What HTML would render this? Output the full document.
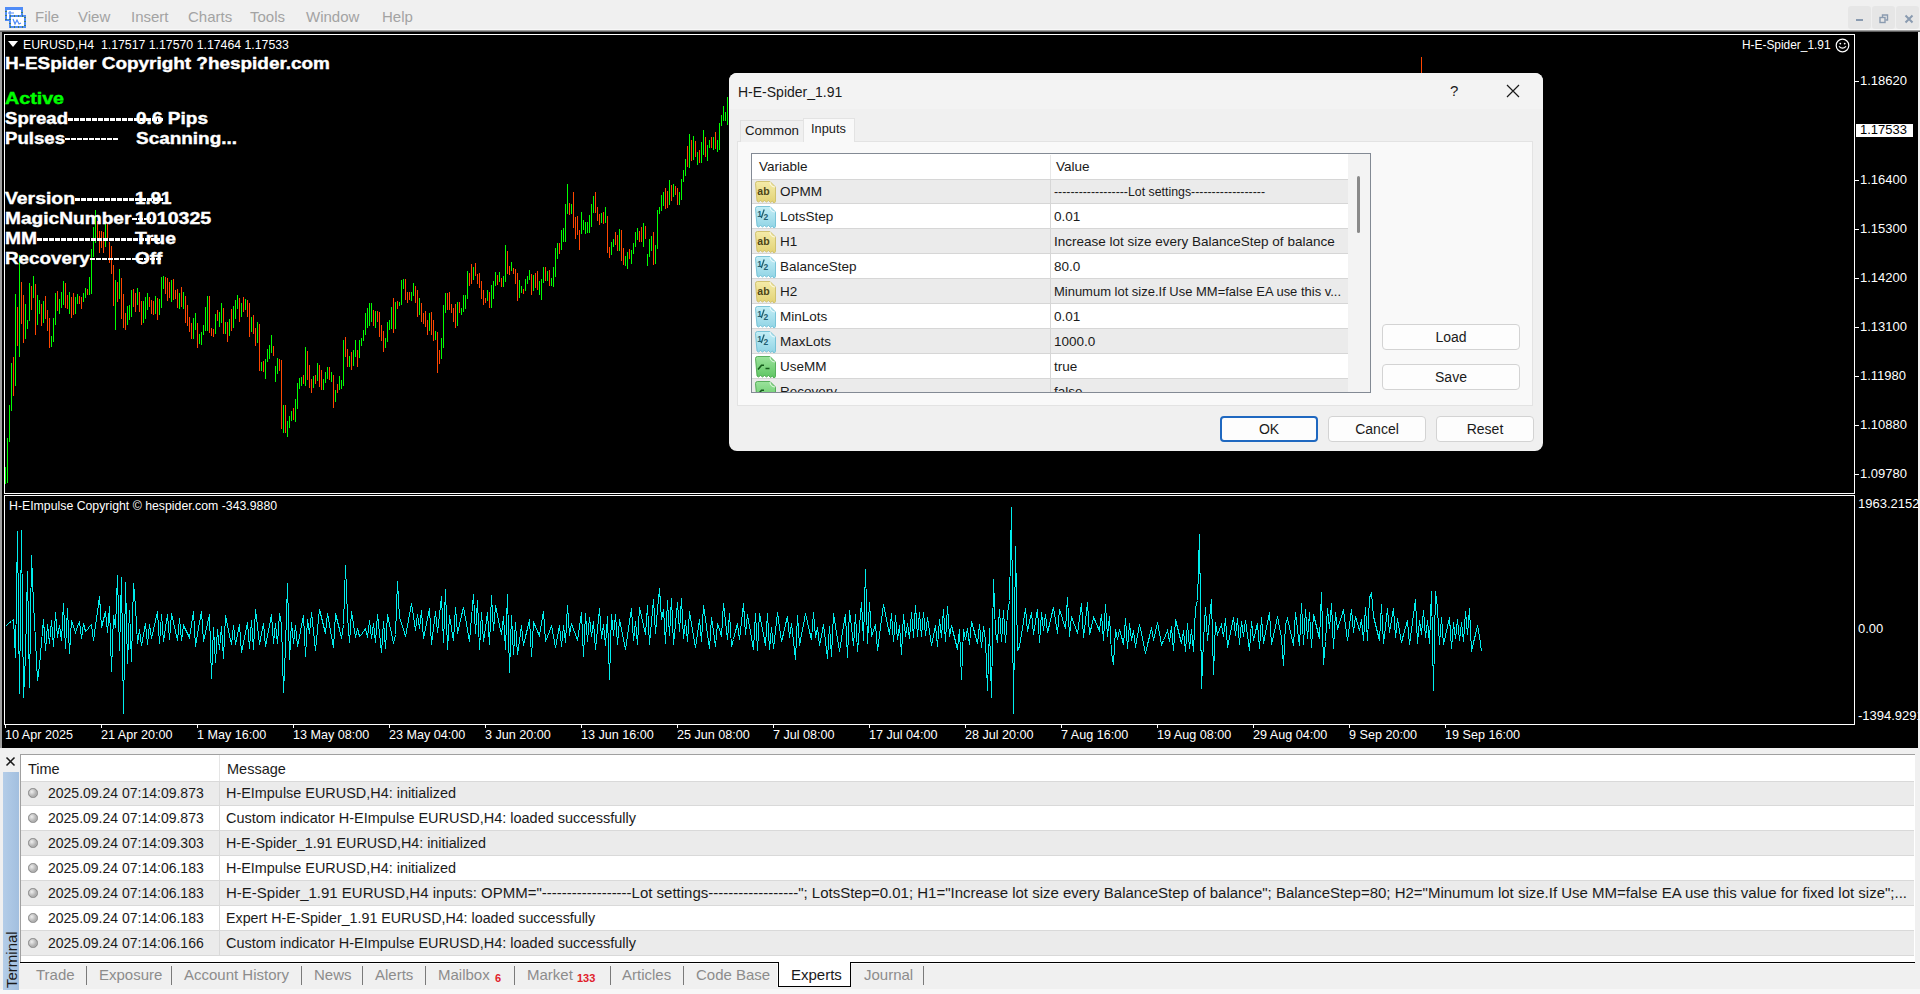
<!DOCTYPE html><html><head><meta charset="utf-8"><style>
*{margin:0;padding:0;box-sizing:border-box}
html,body{width:1920px;height:994px;overflow:hidden;background:#f0f0f0;font-family:"Liberation Sans",sans-serif}
.a{position:absolute;white-space:pre}
#menu{position:absolute;left:0;top:0;width:1920px;height:30px;background:#f0f0f0}
.mi{position:absolute;top:7px;font-size:15px;color:#a3a3a3;line-height:20px}
.wb{position:absolute;top:6px;width:23px;height:23px;background:#e6e6e6;border-radius:3px}
#chartwin{position:absolute;left:2px;top:32px;width:1916px;height:716px;background:#000}
.pl{position:absolute;left:1860px;font-size:13px;color:#fff;line-height:14px}
.tl{position:absolute;top:728px;font-size:12.6px;color:#fff;line-height:14px}
.ov{position:absolute;font-size:16.5px;font-weight:700;color:#fff;line-height:18px;transform-origin:0 0;-webkit-text-stroke:0.4px #fff}

#dlg{position:absolute;left:729px;top:73px;width:814px;height:378px;background:#f0f0f0;border-radius:8px;overflow:hidden}
.dt{position:absolute;font-size:13.5px;color:#1a1a1a;line-height:16px;white-space:pre}
.btn{position:absolute;height:26px;background:#fdfdfd;border:1px solid #d3d3d3;border-radius:4px;font-size:14px;color:#1a1a1a;text-align:center;line-height:24px}

.tt{position:absolute;font-size:14px;color:#1a1a1a;line-height:16px;white-space:pre}
.tab{position:absolute;top:966px;font-size:15px;color:#8c8c8c;line-height:17px;white-space:pre}
.sep{position:absolute;top:966px;width:1px;height:19px;background:#7a7a7a}
</style></head><body><div id="menu">
<svg class="a" style="left:5px;top:7px" width="21" height="21" viewBox="0 0 21 21">
<rect x="1" y="1" width="16" height="12" fill="#fff" stroke="#4f8cf7" stroke-width="2"/>
<rect x="1" y="1" width="16" height="12" fill="none" stroke="#3f7f6a" stroke-width="2" stroke-dasharray="1 3"/>
<rect x="0" y="0" width="18" height="3" fill="#4f8cf7"/>
<rect x="5" y="9" width="15" height="11" fill="#fff" stroke="#4f8cf7" stroke-width="2"/>
<rect x="5" y="9" width="15" height="11" fill="none" stroke="#3f7f6a" stroke-width="2" stroke-dasharray="1 3"/>
<path d="M3 6h6M5 4v4M8 12l2 5 2-4 2 4 2-1" stroke="#4f8cf7" stroke-width="1.2" fill="none"/>
</svg>
<div class="mi" style="left:35px">File</div>
<div class="mi" style="left:78px">View</div>
<div class="mi" style="left:131px">Insert</div>
<div class="mi" style="left:188px">Charts</div>
<div class="mi" style="left:250px">Tools</div>
<div class="mi" style="left:306px">Window</div>
<div class="mi" style="left:382px">Help</div>
<div class="wb" style="left:1848px"></div>
<div class="wb" style="left:1872px"></div>
<div class="wb" style="left:1896px"></div>
<div class="a" style="left:1856px;top:19px;width:7px;height:2px;background:#8a9bb0"></div>
<svg class="a" style="left:1879px;top:14px" width="10" height="10"><rect x="1" y="3.5" width="5" height="5" fill="none" stroke="#8a9bb0" stroke-width="1.4"/><path d="M3.5 3V1h5v5H6.5" fill="none" stroke="#8a9bb0" stroke-width="1.4"/></svg>
<svg class="a" style="left:1904px;top:14px" width="10" height="10"><path d="M1.5 1.5l7 7M8.5 1.5l-7 7" stroke="#8a9bb0" stroke-width="2"/></svg>
</div>
<div class="a" style="left:0;top:29px;width:1920px;height:1px;background:#f8f8f8"></div>
<div class="a" style="left:0;top:30px;width:1920px;height:2px;background:linear-gradient(#c0c0c0,#404040)"></div>
<div class="a" style="left:0;top:32px;width:2px;height:716px;background:#a0a0a0"></div>
<div id="chartwin"></div>
<div class="a" style="left:4px;top:34px;width:1851px;height:460px;border:1px solid #fff"></div>
<div class="a" style="left:4px;top:495px;width:1851px;height:230px;border:1px solid #fff"></div>
<svg class="a" style="left:0;top:0" width="1920" height="994" shape-rendering="crispEdges">
<defs><clipPath id="mc"><rect x="5" y="35" width="1849" height="458"/></clipPath>
<clipPath id="ic"><rect x="5" y="496" width="1849" height="228"/></clipPath></defs>
<g clip-path="url(#mc)"><path d="M5.5 467V484M7.5 438V483M9.5 405V442M11.5 363V411M15.5 294V386M19.5 255V357M25.5 304V339M27.5 320V329M29.5 283V321M33.5 276V298M37.5 295V325M39.5 300V314M43.5 301V323M51.5 336V347M53.5 318V342M55.5 293V325M59.5 299V314M61.5 292V308M63.5 281V305M69.5 292V314M75.5 297V314M77.5 294V304M83.5 293V302M85.5 288V298M89.5 277V295M91.5 249V294M93.5 227V257M95.5 210V243M105.5 223V247M115.5 280V330M119.5 269V299M127.5 306V325M129.5 305V320M131.5 290V317M137.5 288V305M143.5 301V323M145.5 297V319M147.5 293V310M155.5 296V314M159.5 299V315M161.5 277V308M163.5 276V289M171.5 280V302M179.5 293V309M183.5 292V309M193.5 318V339M195.5 313V330M199.5 334V344M201.5 332V345M203.5 325V335M205.5 307V331M207.5 296V331M215.5 314V334M219.5 312V327M221.5 303V323M225.5 322V334M229.5 319V336M233.5 306V328M235.5 300V319M237.5 295V309M241.5 303V317M245.5 299V310M251.5 317V332M257.5 322V343M261.5 362V371M265.5 359V379M267.5 349V362M269.5 345V359M271.5 335V353M275.5 366V382M277.5 358V374M283.5 405V433M287.5 421V437M289.5 416V428M291.5 411V421M295.5 399V422M297.5 383V409M299.5 378V389M301.5 377V386M305.5 347V386M313.5 376V388M317.5 363V381M323.5 379V390M325.5 372V383M327.5 367V379M331.5 372V382M335.5 390V402M339.5 376V390M341.5 380V389M343.5 340V386M349.5 356V367M353.5 350V366M355.5 340V357M359.5 340V358M361.5 338V346M363.5 330V341M365.5 313V335M367.5 308V328M369.5 303V326M371.5 303V322M375.5 311V328M385.5 338V348M387.5 322V342M389.5 320V330M391.5 307V329M395.5 302V329M399.5 302V306M401.5 280V305M403.5 279V289M411.5 292V301M413.5 283V296M419.5 298V315M429.5 313V331M435.5 331V340M441.5 338V359M443.5 305V348M445.5 293V313M457.5 302V326M461.5 308V315M463.5 295V312M465.5 295V309M467.5 271V299M473.5 267V280M487.5 290V301M491.5 285V308M493.5 281V299M495.5 272V286M499.5 272V282M503.5 276V287M505.5 245V282M511.5 262V271M519.5 280V298M521.5 286V293M525.5 279V291M527.5 276V284M529.5 270V280M533.5 275V291M539.5 281V295M541.5 279V300M543.5 267V283M547.5 271V281M551.5 278V286M553.5 267V287M555.5 248V277M557.5 243V259M561.5 230V250M563.5 228V242M565.5 204V242M567.5 184V214M571.5 204V214M581.5 212V234M583.5 220V230M585.5 222V234M587.5 222V233M589.5 215V233M591.5 204V227M593.5 196V213M601.5 213V223M605.5 207V223M611.5 242V255M613.5 239V247M619.5 229V251M625.5 256V266M627.5 252V269M631.5 250V264M633.5 243V254M635.5 232V247M637.5 228V240M643.5 223V247M647.5 254V266M649.5 239V257M651.5 236V251M655.5 245V264M657.5 210V249M659.5 207V214M661.5 195V211M663.5 192V206M669.5 180V205M673.5 184V197M679.5 192V205M681.5 179V200M683.5 170V182M685.5 159V176M689.5 134V168M693.5 136V160M697.5 152V165M701.5 142V163M703.5 130V155M707.5 145V161M709.5 140V148M713.5 137V150M717.5 140V152M719.5 123V150M721.5 115V126M723.5 106V121M725.5 112V121M727.5 97V125" stroke="#00ff00" stroke-width="1"/>
<path d="M13.5 357V396M17.5 307V346M21.5 282V324M23.5 295V343M31.5 286V310M35.5 284V335M41.5 304V326M45.5 296V319M47.5 310V331M49.5 318V348M57.5 291V311M65.5 283V308M67.5 295V309M71.5 297V318M73.5 293V315M79.5 296V304M81.5 297V309M87.5 289V295M97.5 221V238M99.5 231V253M101.5 231V248M103.5 232V253M107.5 223V241M109.5 242V263M111.5 246V274M113.5 265V306M117.5 282V302M121.5 278V319M123.5 294V328M125.5 313V330M133.5 289V307M135.5 293V312M139.5 292V312M141.5 301V325M149.5 297V307M151.5 300V314M153.5 301V315M157.5 298V320M165.5 277V294M167.5 278V301M169.5 282V298M173.5 279V300M175.5 290V299M177.5 289V308M181.5 287V307M185.5 296V323M187.5 305V326M189.5 317V332M191.5 323V339M197.5 323V348M209.5 296V333M211.5 328V336M213.5 329V337M217.5 310V321M223.5 308V334M227.5 322V342M231.5 309V331M239.5 298V322M243.5 297V312M247.5 300V317M249.5 303V337M253.5 315V334M255.5 328V346M259.5 324V371M263.5 361V372M273.5 346V356M279.5 359V371M281.5 360V429M285.5 405V433M293.5 408V420M303.5 375V384M307.5 351V380M309.5 365V388M311.5 379V393M315.5 375V384M319.5 365V387M321.5 370V390M329.5 367V380M333.5 375V408M337.5 384V393M345.5 337V357M347.5 349V367M351.5 352V370M357.5 350V367M373.5 310V326M377.5 311V322M379.5 312V337M381.5 325V341M383.5 331V352M393.5 298V333M397.5 301V309M405.5 279V300M407.5 292V303M409.5 292V300M415.5 286V303M417.5 290V317M421.5 303V322M423.5 313V324M425.5 311V327M427.5 320V335M431.5 312V335M433.5 320V341M437.5 332V373M439.5 350V364M447.5 293V310M449.5 292V310M451.5 304V313M453.5 308V322M455.5 304V328M459.5 302V313M469.5 273V286M471.5 264V284M475.5 263V276M477.5 274V284M479.5 273V288M481.5 281V299M483.5 290V305M485.5 298V303M489.5 292V308M497.5 275V285M501.5 278V287M507.5 251V274M509.5 266V275M513.5 268V274M515.5 269V284M517.5 273V301M523.5 289V294M531.5 274V295M535.5 273V288M537.5 271V290M545.5 267V281M549.5 270V286M559.5 243V254M569.5 203V215M573.5 192V228M575.5 217V239M577.5 216V235M579.5 230V250M595.5 192V213M597.5 207V221M599.5 214V225M603.5 212V224M607.5 216V253M609.5 247V258M615.5 232V245M617.5 235V251M621.5 230V261M623.5 248V265M629.5 249V259M639.5 231V242M641.5 227V242M645.5 226V239M653.5 232V265M665.5 188V209M667.5 191V208M671.5 185V201M675.5 186V195M677.5 188V205M687.5 146V167M691.5 140V161M695.5 141V157M699.5 150V163M705.5 137V157M711.5 137V148M715.5 132V149M1421.5 57V80" stroke="#ff4500" stroke-width="1"/></g>
<g clip-path="url(#ic)"><polyline fill="none" stroke="#00eeee" stroke-width="1" points="5.5,626.5 7.5,624.5 9.5,622.5 11.5,621.5 13.5,619.5 15.5,657.5 17.5,531.5 19.5,693.5 21.5,530.5 23.5,697.5 25.5,655.5 27.5,571.5 29.5,687.5 31.5,555.5 33.5,603.5 35.5,640.5 37.5,680.5 39.5,665.5 41.5,642.5 43.5,619.5 45.5,650.5 47.5,624.5 49.5,643.5 51.5,620.5 53.5,646.5 55.5,612.5 57.5,637.5 59.5,625.5 61.5,640.5 63.5,603.5 65.5,648.5 67.5,608.5 69.5,653.5 71.5,620.5 73.5,626.5 75.5,632.5 77.5,626.5 79.5,621.5 81.5,638.5 83.5,623.5 85.5,631.5 87.5,629.5 89.5,626.5 91.5,624.5 93.5,640.5 95.5,625.5 97.5,611.5 99.5,596.5 101.5,627.5 103.5,619.5 105.5,611.5 107.5,632.5 109.5,606.5 111.5,671.5 113.5,615.5 115.5,627.5 117.5,575.5 119.5,650.5 121.5,577.5 123.5,713.5 125.5,582.5 127.5,663.5 129.5,610.5 131.5,661.5 133.5,583.5 135.5,606.5 137.5,643.5 139.5,629.5 141.5,645.5 143.5,634.5 145.5,623.5 147.5,644.5 149.5,624.5 151.5,638.5 153.5,629.5 155.5,620.5 157.5,611.5 159.5,643.5 161.5,614.5 163.5,641.5 165.5,627.5 167.5,614.5 169.5,639.5 171.5,613.5 173.5,622.5 175.5,631.5 177.5,640.5 179.5,618.5 181.5,640.5 183.5,625.5 185.5,629.5 187.5,633.5 189.5,637.5 191.5,624.5 193.5,611.5 195.5,646.5 197.5,634.5 199.5,622.5 201.5,611.5 203.5,641.5 205.5,632.5 207.5,623.5 209.5,614.5 211.5,678.5 213.5,627.5 215.5,662.5 217.5,629.5 219.5,649.5 221.5,626.5 223.5,658.5 225.5,615.5 227.5,625.5 229.5,635.5 231.5,644.5 233.5,625.5 235.5,644.5 237.5,634.5 239.5,624.5 241.5,652.5 243.5,642.5 245.5,632.5 247.5,622.5 249.5,648.5 251.5,620.5 253.5,649.5 255.5,609.5 257.5,626.5 259.5,644.5 261.5,633.5 263.5,623.5 265.5,646.5 267.5,635.5 269.5,625.5 271.5,614.5 273.5,643.5 275.5,623.5 277.5,643.5 279.5,613.5 281.5,624.5 283.5,692.5 285.5,646.5 287.5,583.5 289.5,659.5 291.5,622.5 293.5,643.5 295.5,625.5 297.5,646.5 299.5,636.5 301.5,625.5 303.5,615.5 305.5,656.5 307.5,619.5 309.5,633.5 311.5,612.5 313.5,631.5 315.5,650.5 317.5,629.5 319.5,609.5 321.5,617.5 323.5,625.5 325.5,633.5 327.5,613.5 329.5,624.5 331.5,636.5 333.5,647.5 335.5,613.5 337.5,621.5 339.5,629.5 341.5,638.5 343.5,624.5 345.5,565.5 347.5,616.5 349.5,642.5 351.5,611.5 353.5,624.5 355.5,637.5 357.5,628.5 359.5,636.5 361.5,634.5 363.5,631.5 365.5,628.5 367.5,637.5 369.5,620.5 371.5,638.5 373.5,623.5 375.5,642.5 377.5,614.5 379.5,633.5 381.5,652.5 383.5,621.5 385.5,648.5 387.5,614.5 389.5,624.5 391.5,633.5 393.5,643.5 395.5,634.5 397.5,581.5 399.5,617.5 401.5,623.5 403.5,629.5 405.5,636.5 407.5,625.5 409.5,614.5 411.5,603.5 413.5,616.5 415.5,630.5 417.5,614.5 419.5,628.5 421.5,610.5 423.5,638.5 425.5,628.5 427.5,618.5 429.5,608.5 431.5,644.5 433.5,628.5 435.5,611.5 437.5,632.5 439.5,614.5 441.5,596.5 443.5,642.5 445.5,589.5 447.5,649.5 449.5,615.5 451.5,628.5 453.5,640.5 455.5,607.5 457.5,633.5 459.5,624.5 461.5,615.5 463.5,607.5 465.5,618.5 467.5,629.5 469.5,641.5 471.5,617.5 473.5,594.5 475.5,633.5 477.5,600.5 479.5,649.5 481.5,612.5 483.5,641.5 485.5,627.5 487.5,612.5 489.5,644.5 491.5,595.5 493.5,630.5 495.5,605.5 497.5,615.5 499.5,625.5 501.5,634.5 503.5,616.5 505.5,649.5 507.5,594.5 509.5,672.5 511.5,615.5 513.5,654.5 515.5,622.5 517.5,654.5 519.5,640.5 521.5,625.5 523.5,645.5 525.5,636.5 527.5,628.5 529.5,619.5 531.5,656.5 533.5,622.5 535.5,626.5 537.5,631.5 539.5,635.5 541.5,623.5 543.5,611.5 545.5,641.5 547.5,636.5 549.5,631.5 551.5,625.5 553.5,636.5 555.5,647.5 557.5,636.5 559.5,625.5 561.5,646.5 563.5,625.5 565.5,642.5 567.5,605.5 569.5,635.5 571.5,623.5 573.5,629.5 575.5,634.5 577.5,640.5 579.5,626.5 581.5,612.5 583.5,656.5 585.5,613.5 587.5,641.5 589.5,617.5 591.5,636.5 593.5,621.5 595.5,649.5 597.5,629.5 599.5,608.5 601.5,638.5 603.5,624.5 605.5,645.5 607.5,616.5 609.5,679.5 611.5,614.5 613.5,635.5 615.5,614.5 617.5,644.5 619.5,619.5 621.5,629.5 623.5,639.5 625.5,649.5 627.5,635.5 629.5,621.5 631.5,608.5 633.5,640.5 635.5,621.5 637.5,644.5 639.5,607.5 641.5,616.5 643.5,625.5 645.5,634.5 647.5,605.5 649.5,644.5 651.5,621.5 653.5,599.5 655.5,633.5 657.5,609.5 659.5,588.5 661.5,619.5 663.5,609.5 665.5,643.5 667.5,600.5 669.5,635.5 671.5,598.5 673.5,644.5 675.5,623.5 677.5,602.5 679.5,631.5 681.5,598.5 683.5,638.5 685.5,620.5 687.5,641.5 689.5,611.5 691.5,623.5 693.5,635.5 695.5,647.5 697.5,633.5 699.5,619.5 701.5,641.5 703.5,605.5 705.5,619.5 707.5,634.5 709.5,648.5 711.5,617.5 713.5,631.5 715.5,646.5 717.5,623.5 719.5,629.5 721.5,636.5 723.5,603.5 725.5,621.5 727.5,639.5 729.5,613.5 731.5,646.5 733.5,639.5 735.5,631.5 737.5,623.5 739.5,639.5 741.5,621.5 743.5,603.5 745.5,634.5 747.5,614.5 749.5,626.5 751.5,637.5 753.5,649.5 755.5,613.5 757.5,650.5 759.5,613.5 761.5,624.5 763.5,634.5 765.5,645.5 767.5,613.5 769.5,649.5 771.5,627.5 773.5,648.5 775.5,630.5 777.5,612.5 779.5,627.5 781.5,641.5 783.5,633.5 785.5,624.5 787.5,616.5 789.5,637.5 791.5,623.5 793.5,641.5 795.5,659.5 797.5,615.5 799.5,645.5 801.5,634.5 803.5,624.5 805.5,613.5 807.5,622.5 809.5,631.5 811.5,639.5 813.5,612.5 815.5,637.5 817.5,627.5 819.5,645.5 821.5,635.5 823.5,624.5 825.5,641.5 827.5,658.5 829.5,626.5 831.5,656.5 833.5,613.5 835.5,626.5 837.5,638.5 839.5,651.5 841.5,638.5 843.5,626.5 845.5,614.5 847.5,657.5 849.5,610.5 851.5,627.5 853.5,645.5 855.5,614.5 857.5,651.5 859.5,626.5 861.5,602.5 863.5,640.5 865.5,569.5 867.5,643.5 869.5,602.5 871.5,636.5 873.5,630.5 875.5,624.5 877.5,650.5 879.5,635.5 881.5,619.5 883.5,604.5 885.5,614.5 887.5,624.5 889.5,634.5 891.5,613.5 893.5,641.5 895.5,615.5 897.5,639.5 899.5,625.5 901.5,654.5 903.5,614.5 905.5,636.5 907.5,623.5 909.5,638.5 911.5,612.5 913.5,637.5 915.5,605.5 917.5,636.5 919.5,612.5 921.5,636.5 923.5,612.5 925.5,635.5 927.5,617.5 929.5,631.5 931.5,645.5 933.5,635.5 935.5,625.5 937.5,646.5 939.5,619.5 941.5,637.5 943.5,609.5 945.5,641.5 947.5,606.5 949.5,636.5 951.5,625.5 953.5,633.5 955.5,641.5 957.5,649.5 959.5,629.5 961.5,679.5 963.5,629.5 965.5,639.5 967.5,628.5 969.5,644.5 971.5,621.5 973.5,628.5 975.5,636.5 977.5,643.5 979.5,624.5 981.5,647.5 983.5,626.5 985.5,640.5 987.5,690.5 989.5,628.5 991.5,697.5 993.5,579.5 995.5,632.5 997.5,642.5 999.5,609.5 1001.5,641.5 1003.5,610.5 1005.5,642.5 1007.5,613.5 1009.5,600.5 1011.5,507.5 1013.5,713.5 1015.5,546.5 1017.5,650.5 1019.5,646.5 1021.5,634.5 1023.5,621.5 1025.5,608.5 1027.5,631.5 1029.5,621.5 1031.5,612.5 1033.5,634.5 1035.5,621.5 1037.5,609.5 1039.5,642.5 1041.5,612.5 1043.5,630.5 1045.5,614.5 1047.5,632.5 1049.5,624.5 1051.5,615.5 1053.5,607.5 1055.5,620.5 1057.5,633.5 1059.5,609.5 1061.5,615.5 1063.5,622.5 1065.5,628.5 1067.5,597.5 1069.5,636.5 1071.5,616.5 1073.5,622.5 1075.5,627.5 1077.5,633.5 1079.5,618.5 1081.5,603.5 1083.5,637.5 1085.5,620.5 1087.5,602.5 1089.5,634.5 1091.5,626.5 1093.5,617.5 1095.5,621.5 1097.5,626.5 1099.5,630.5 1101.5,614.5 1103.5,640.5 1105.5,604.5 1107.5,636.5 1109.5,616.5 1111.5,653.5 1113.5,664.5 1115.5,629.5 1117.5,639.5 1119.5,629.5 1121.5,636.5 1123.5,644.5 1125.5,618.5 1127.5,648.5 1129.5,623.5 1131.5,640.5 1133.5,630.5 1135.5,647.5 1137.5,635.5 1139.5,624.5 1141.5,633.5 1143.5,643.5 1145.5,653.5 1147.5,644.5 1149.5,636.5 1151.5,627.5 1153.5,640.5 1155.5,631.5 1157.5,622.5 1159.5,633.5 1161.5,644.5 1163.5,640.5 1165.5,635.5 1167.5,630.5 1169.5,641.5 1171.5,626.5 1173.5,650.5 1175.5,619.5 1177.5,627.5 1179.5,635.5 1181.5,643.5 1183.5,630.5 1185.5,651.5 1187.5,623.5 1189.5,648.5 1191.5,629.5 1193.5,651.5 1195.5,607.5 1197.5,600.5 1199.5,534.5 1201.5,688.5 1203.5,640.5 1205.5,607.5 1207.5,640.5 1209.5,619.5 1211.5,599.5 1213.5,674.5 1215.5,622.5 1217.5,634.5 1219.5,629.5 1221.5,624.5 1223.5,636.5 1225.5,618.5 1227.5,647.5 1229.5,637.5 1231.5,627.5 1233.5,617.5 1235.5,635.5 1237.5,618.5 1239.5,644.5 1241.5,621.5 1243.5,636.5 1245.5,620.5 1247.5,635.5 1249.5,650.5 1251.5,621.5 1253.5,640.5 1255.5,631.5 1257.5,623.5 1259.5,648.5 1261.5,617.5 1263.5,643.5 1265.5,632.5 1267.5,622.5 1269.5,612.5 1271.5,644.5 1273.5,635.5 1275.5,626.5 1277.5,616.5 1279.5,627.5 1281.5,637.5 1283.5,665.5 1285.5,624.5 1287.5,618.5 1289.5,627.5 1291.5,636.5 1293.5,645.5 1295.5,612.5 1297.5,629.5 1299.5,645.5 1301.5,603.5 1303.5,644.5 1305.5,609.5 1307.5,638.5 1309.5,612.5 1311.5,647.5 1313.5,614.5 1315.5,622.5 1317.5,630.5 1319.5,638.5 1321.5,592.5 1323.5,664.5 1325.5,641.5 1327.5,608.5 1329.5,628.5 1331.5,603.5 1333.5,648.5 1335.5,612.5 1337.5,629.5 1339.5,622.5 1341.5,616.5 1343.5,609.5 1345.5,625.5 1347.5,640.5 1349.5,625.5 1351.5,609.5 1353.5,632.5 1355.5,616.5 1357.5,623.5 1359.5,630.5 1361.5,619.5 1363.5,640.5 1365.5,607.5 1367.5,640.5 1369.5,597.5 1371.5,593.5 1373.5,616.5 1375.5,624.5 1377.5,632.5 1379.5,640.5 1381.5,604.5 1383.5,643.5 1385.5,626.5 1387.5,608.5 1389.5,632.5 1391.5,620.5 1393.5,608.5 1395.5,637.5 1397.5,618.5 1399.5,630.5 1401.5,642.5 1403.5,634.5 1405.5,627.5 1407.5,620.5 1409.5,644.5 1411.5,629.5 1413.5,614.5 1415.5,599.5 1417.5,643.5 1419.5,620.5 1421.5,634.5 1423.5,610.5 1425.5,637.5 1427.5,620.5 1429.5,643.5 1431.5,591.5 1433.5,690.5 1435.5,591.5 1437.5,608.5 1439.5,644.5 1441.5,617.5 1443.5,644.5 1445.5,635.5 1447.5,626.5 1449.5,617.5 1451.5,648.5 1453.5,622.5 1455.5,638.5 1457.5,619.5 1459.5,640.5 1461.5,622.5 1463.5,641.5 1465.5,611.5 1467.5,634.5 1469.5,608.5 1471.5,651.5 1473.5,642.5 1475.5,634.5 1477.5,625.5 1479.5,636.5 1481.5,651.5"/></g>
</svg>
<div class="a" style="left:1855px;top:81px;width:4px;height:1px;background:#fff"></div>
<div class="pl" style="top:74px">1.18620</div>
<div class="a" style="left:1855px;top:180px;width:4px;height:1px;background:#fff"></div>
<div class="pl" style="top:173px">1.16400</div>
<div class="a" style="left:1855px;top:229px;width:4px;height:1px;background:#fff"></div>
<div class="pl" style="top:222px">1.15300</div>
<div class="a" style="left:1855px;top:278px;width:4px;height:1px;background:#fff"></div>
<div class="pl" style="top:271px">1.14200</div>
<div class="a" style="left:1855px;top:327px;width:4px;height:1px;background:#fff"></div>
<div class="pl" style="top:320px">1.13100</div>
<div class="a" style="left:1855px;top:376px;width:4px;height:1px;background:#fff"></div>
<div class="pl" style="top:369px">1.11980</div>
<div class="a" style="left:1855px;top:425px;width:4px;height:1px;background:#fff"></div>
<div class="pl" style="top:418px">1.10880</div>
<div class="a" style="left:1855px;top:474px;width:4px;height:1px;background:#fff"></div>
<div class="pl" style="top:467px">1.09780</div>
<div class="a" style="left:1856px;top:124px;width:57px;height:13px;background:#fff"></div>
<div class="pl" style="top:123px;color:#000">1.17533</div>
<div class="pl" style="top:497px;left:1858px">1963.2152</div>
<div class="pl" style="top:622px;left:1858px">0.00</div>
<div class="pl" style="top:709px;left:1858px">-1394.9291</div>
<div class="a" style="left:5px;top:725px;width:1px;height:3px;background:#fff"></div>
<div class="tl" style="left:5px">10 Apr 2025</div>
<div class="a" style="left:101px;top:725px;width:1px;height:3px;background:#fff"></div>
<div class="tl" style="left:101px">21 Apr 20:00</div>
<div class="a" style="left:197px;top:725px;width:1px;height:3px;background:#fff"></div>
<div class="tl" style="left:197px">1 May 16:00</div>
<div class="a" style="left:293px;top:725px;width:1px;height:3px;background:#fff"></div>
<div class="tl" style="left:293px">13 May 08:00</div>
<div class="a" style="left:389px;top:725px;width:1px;height:3px;background:#fff"></div>
<div class="tl" style="left:389px">23 May 04:00</div>
<div class="a" style="left:485px;top:725px;width:1px;height:3px;background:#fff"></div>
<div class="tl" style="left:485px">3 Jun 20:00</div>
<div class="a" style="left:581px;top:725px;width:1px;height:3px;background:#fff"></div>
<div class="tl" style="left:581px">13 Jun 16:00</div>
<div class="a" style="left:677px;top:725px;width:1px;height:3px;background:#fff"></div>
<div class="tl" style="left:677px">25 Jun 08:00</div>
<div class="a" style="left:773px;top:725px;width:1px;height:3px;background:#fff"></div>
<div class="tl" style="left:773px">7 Jul 08:00</div>
<div class="a" style="left:869px;top:725px;width:1px;height:3px;background:#fff"></div>
<div class="tl" style="left:869px">17 Jul 04:00</div>
<div class="a" style="left:965px;top:725px;width:1px;height:3px;background:#fff"></div>
<div class="tl" style="left:965px">28 Jul 20:00</div>
<div class="a" style="left:1061px;top:725px;width:1px;height:3px;background:#fff"></div>
<div class="tl" style="left:1061px">7 Aug 16:00</div>
<div class="a" style="left:1157px;top:725px;width:1px;height:3px;background:#fff"></div>
<div class="tl" style="left:1157px">19 Aug 08:00</div>
<div class="a" style="left:1253px;top:725px;width:1px;height:3px;background:#fff"></div>
<div class="tl" style="left:1253px">29 Aug 04:00</div>
<div class="a" style="left:1349px;top:725px;width:1px;height:3px;background:#fff"></div>
<div class="tl" style="left:1349px">9 Sep 20:00</div>
<div class="a" style="left:1445px;top:725px;width:1px;height:3px;background:#fff"></div>
<div class="tl" style="left:1445px">19 Sep 16:00</div>
<svg class="a" style="left:8px;top:41px" width="10" height="7"><path d="M0 0h10L5 6z" fill="#fff"/></svg>
<div class="a" style="left:23px;top:38px;font-size:12.3px;color:#fff;line-height:14px">EURUSD,H4  1.17517 1.17570 1.17464 1.17533</div>
<div class="a" style="left:1742px;top:38px;font-size:11.9px;color:#fff;line-height:14px">H-E-Spider_1.91</div>
<svg class="a" style="left:1835px;top:38px" width="15" height="15" viewBox="0 0 15 15"><circle cx="7.5" cy="7.5" r="6.3" fill="none" stroke="#fff" stroke-width="1.2"/><circle cx="5.3" cy="5.6" r="0.9" fill="#fff"/><circle cx="9.7" cy="5.6" r="0.9" fill="#fff"/><path d="M4 8.3q3.5 3.6 7 0" fill="none" stroke="#fff" stroke-width="1.2"/></svg>
<div class="a" style="left:9px;top:499px;font-size:12.3px;color:#fff;line-height:14px">H-EImpulse Copyright © hespider.com -343.9880</div>
<div class="ov" style="left:5.3px;top:54.3px;color:#fff;-webkit-text-stroke-color:#fff;transform:scaleX(1.147)">H-ESpider Copyright ?hespider.com</div>
<div class="ov" style="left:5.3px;top:88.8px;color:#00ff00;-webkit-text-stroke-color:#00ff00;transform:scaleX(1.192)">Active</div>
<div class="ov" style="left:5.3px;top:108.6px;color:#fff;-webkit-text-stroke-color:#fff;transform:scaleX(1.127)">Spread</div>
<div class="ov" style="left:135.5px;top:108.6px;color:#fff;-webkit-text-stroke-color:#fff;transform:scaleX(1.154)">0.6 Pips</div>
<div class="ov" style="left:5.3px;top:128.6px;color:#fff;-webkit-text-stroke-color:#fff;transform:scaleX(1.128)">Pulses</div>
<div class="ov" style="left:135.5px;top:128.6px;color:#fff;-webkit-text-stroke-color:#fff;transform:scaleX(1.148)">Scanning...</div>
<div class="ov" style="left:5.3px;top:189.2px;color:#fff;-webkit-text-stroke-color:#fff;transform:scaleX(1.174)">Version</div>
<div class="ov" style="left:135.4px;top:189.2px;color:#fff;-webkit-text-stroke-color:#fff;transform:scaleX(1.137)">1.91</div>
<div class="ov" style="left:5.3px;top:209.2px;color:#fff;-webkit-text-stroke-color:#fff;transform:scaleX(1.159)">MagicNumber</div>
<div class="ov" style="left:135.4px;top:209.2px;color:#fff;-webkit-text-stroke-color:#fff;transform:scaleX(1.187)">1010325</div>
<div class="ov" style="left:5.3px;top:229.2px;color:#fff;-webkit-text-stroke-color:#fff;transform:scaleX(1.164)">MM</div>
<div class="ov" style="left:135.4px;top:229.2px;color:#fff;-webkit-text-stroke-color:#fff;transform:scaleX(1.175)">True</div>
<div class="ov" style="left:5.3px;top:249.2px;color:#fff;-webkit-text-stroke-color:#fff;transform:scaleX(1.141)">Recovery</div>
<div class="ov" style="left:135.4px;top:249.2px;color:#fff;-webkit-text-stroke-color:#fff;transform:scaleX(1.151)">Off</div>
<div class="a" style="left:68px;top:118.0px;width:95.0px;height:2.6px;background:repeating-linear-gradient(90deg,#fff 0 5px,transparent 5px 6px)"></div>
<div class="a" style="left:65px;top:137.7px;width:53.5px;height:2.6px;background:repeating-linear-gradient(90deg,#fff 0 5px,transparent 5px 6px)"></div>
<div class="a" style="left:75px;top:198.3px;width:88.4px;height:2.6px;background:repeating-linear-gradient(90deg,#fff 0 5px,transparent 5px 6px)"></div>
<div class="a" style="left:131.5px;top:217.7px;width:19.5px;height:2.6px;background:repeating-linear-gradient(90deg,#fff 0 5px,transparent 5px 6px)"></div>
<div class="a" style="left:37px;top:238.1px;width:123.0px;height:2.6px;background:repeating-linear-gradient(90deg,#fff 0 5px,transparent 5px 6px)"></div>
<div class="a" style="left:89.8px;top:257.7px;width:71.0px;height:2.6px;background:repeating-linear-gradient(90deg,#fff 0 5px,transparent 5px 6px)"></div>
<div id="dlg"></div>
<div class="a" style="left:729px;top:73px;width:814px;height:36px;background:#f3f3f3;border-radius:8px 8px 0 0"></div>
<div class="dt" style="left:738px;top:84px;font-size:14px">H-E-Spider_1.91</div>
<div class="dt" style="left:1450px;top:83px;font-size:15px">?</div>
<svg class="a" style="left:1505px;top:83px" width="16" height="16"><path d="M2 2l12 12M14 2L2 14" stroke="#1a1a1a" stroke-width="1.2"/></svg>
<div class="a" style="left:737px;top:141px;width:796px;height:265px;background:#f9f9f9;border:1px solid #e3e3e3"></div>
<div class="a" style="left:740px;top:120px;width:64px;height:22px;background:#f0f0f0;border:1px solid #e0e0e0;border-bottom:none"></div>
<div class="a" style="left:803px;top:118px;width:52px;height:24px;background:#f9f9f9;border:1px solid #e3e3e3;border-bottom:none"></div>
<div class="dt" style="left:745px;top:123px;font-size:13.3px">Common</div>
<div class="dt" style="left:811px;top:121px;font-size:12.8px">Inputs</div>
<div class="a" style="left:751px;top:153px;width:620px;height:240px;background:#fff;border:1px solid #838a94"></div>
<div class="a" style="left:1050px;top:155px;width:1px;height:24px;background:#e8e8e8"></div>
<div class="dt" style="left:759px;top:159px">Variable</div>
<div class="dt" style="left:1056px;top:159px">Value</div>
<div class="a" style="left:752px;top:179px;width:596px;height:213px;overflow:hidden">
<div class="a" style="left:0;top:0px;width:596px;height:24px;background:#ebebeb;border-top:1px solid #d6d6d6"></div>
<div class="a" style="left:298px;top:0px;width:1px;height:24px;background:#d6d6d6"></div>
<svg class="a" style="left:3px;top:2px" width="22" height="23" viewBox="0 0 22 23"><defs><linearGradient id="gab" x1="0" y1="0" x2="0" y2="1"><stop offset="0" stop-color="#f4eba8"/><stop offset="1" stop-color="#e2d274"/></linearGradient></defs><path d="M0.5 2.5q0-2 2-2h12.5l5.5 5.5v14.5l-1.5 2-1.5-2.5-2 1.5-2-2-2 1.5-2-1.5-2 1.5-2-1.5-2 1.5-1.5-1z" fill="url(#gab)" stroke="#c9b95c" stroke-width="0.8"/><path d="M15 0.8q0 5 5.2 5.2" fill="none" stroke="#fff" stroke-opacity="0.8" stroke-width="0.9"/><text x="2.3" y="13.6" font-size="10.5" font-weight="700" font-family="Liberation Sans" fill="#4d4618">ab</text></svg>
<div class="dt" style="left:28px;top:5px">OPMM</div>
<div class="dt" style="left:302px;top:5px;transform-origin:0 0;transform:scaleX(0.914)">------------------Lot settings------------------</div>
<div class="a" style="left:0;top:24px;width:596px;height:25px;background:#ffffff;border-top:1px solid #d6d6d6"></div>
<div class="a" style="left:298px;top:24px;width:1px;height:25px;background:#d6d6d6"></div>
<svg class="a" style="left:3px;top:27px" width="22" height="23" viewBox="0 0 22 23"><defs><linearGradient id="gnum" x1="0" y1="0" x2="0" y2="1"><stop offset="0" stop-color="#c4eef6"/><stop offset="1" stop-color="#8fd3e4"/></linearGradient></defs><path d="M0.5 2.5q0-2 2-2h12.5l5.5 5.5v14.5l-1.5 2-1.5-2.5-2 1.5-2-2-2 1.5-2-1.5-2 1.5-2-1.5-2 1.5-1.5-1z" fill="url(#gnum)" stroke="#62b9d0" stroke-width="0.8"/><path d="M15 0.8q0 5 5.2 5.2" fill="none" stroke="#fff" stroke-opacity="0.8" stroke-width="0.9"/><text x="2.2" y="10.5" font-size="8.5" font-weight="700" font-family="Liberation Sans" fill="#1f5f72">1</text><path d="M6.2 12l3-8.5" stroke="#1f5f72" stroke-width="1.3"/><text x="8.4" y="13.8" font-size="8.5" font-weight="700" font-family="Liberation Sans" fill="#1f5f72">2</text></svg>
<div class="dt" style="left:28px;top:30px">LotsStep</div>
<div class="dt" style="left:302px;top:30px;transform-origin:0 0;transform:scaleX(1.0)">0.01</div>
<div class="a" style="left:0;top:49px;width:596px;height:25px;background:#ebebeb;border-top:1px solid #d6d6d6"></div>
<div class="a" style="left:298px;top:49px;width:1px;height:25px;background:#d6d6d6"></div>
<svg class="a" style="left:3px;top:52px" width="22" height="23" viewBox="0 0 22 23"><defs><linearGradient id="gab" x1="0" y1="0" x2="0" y2="1"><stop offset="0" stop-color="#f4eba8"/><stop offset="1" stop-color="#e2d274"/></linearGradient></defs><path d="M0.5 2.5q0-2 2-2h12.5l5.5 5.5v14.5l-1.5 2-1.5-2.5-2 1.5-2-2-2 1.5-2-1.5-2 1.5-2-1.5-2 1.5-1.5-1z" fill="url(#gab)" stroke="#c9b95c" stroke-width="0.8"/><path d="M15 0.8q0 5 5.2 5.2" fill="none" stroke="#fff" stroke-opacity="0.8" stroke-width="0.9"/><text x="2.3" y="13.6" font-size="10.5" font-weight="700" font-family="Liberation Sans" fill="#4d4618">ab</text></svg>
<div class="dt" style="left:28px;top:55px">H1</div>
<div class="dt" style="left:302px;top:55px;transform-origin:0 0;transform:scaleX(1.0)">Increase lot size every BalanceStep of balance</div>
<div class="a" style="left:0;top:74px;width:596px;height:25px;background:#ffffff;border-top:1px solid #d6d6d6"></div>
<div class="a" style="left:298px;top:74px;width:1px;height:25px;background:#d6d6d6"></div>
<svg class="a" style="left:3px;top:77px" width="22" height="23" viewBox="0 0 22 23"><defs><linearGradient id="gnum" x1="0" y1="0" x2="0" y2="1"><stop offset="0" stop-color="#c4eef6"/><stop offset="1" stop-color="#8fd3e4"/></linearGradient></defs><path d="M0.5 2.5q0-2 2-2h12.5l5.5 5.5v14.5l-1.5 2-1.5-2.5-2 1.5-2-2-2 1.5-2-1.5-2 1.5-2-1.5-2 1.5-1.5-1z" fill="url(#gnum)" stroke="#62b9d0" stroke-width="0.8"/><path d="M15 0.8q0 5 5.2 5.2" fill="none" stroke="#fff" stroke-opacity="0.8" stroke-width="0.9"/><text x="2.2" y="10.5" font-size="8.5" font-weight="700" font-family="Liberation Sans" fill="#1f5f72">1</text><path d="M6.2 12l3-8.5" stroke="#1f5f72" stroke-width="1.3"/><text x="8.4" y="13.8" font-size="8.5" font-weight="700" font-family="Liberation Sans" fill="#1f5f72">2</text></svg>
<div class="dt" style="left:28px;top:80px">BalanceStep</div>
<div class="dt" style="left:302px;top:80px;transform-origin:0 0;transform:scaleX(1.0)">80.0</div>
<div class="a" style="left:0;top:99px;width:596px;height:25px;background:#ebebeb;border-top:1px solid #d6d6d6"></div>
<div class="a" style="left:298px;top:99px;width:1px;height:25px;background:#d6d6d6"></div>
<svg class="a" style="left:3px;top:102px" width="22" height="23" viewBox="0 0 22 23"><defs><linearGradient id="gab" x1="0" y1="0" x2="0" y2="1"><stop offset="0" stop-color="#f4eba8"/><stop offset="1" stop-color="#e2d274"/></linearGradient></defs><path d="M0.5 2.5q0-2 2-2h12.5l5.5 5.5v14.5l-1.5 2-1.5-2.5-2 1.5-2-2-2 1.5-2-1.5-2 1.5-2-1.5-2 1.5-1.5-1z" fill="url(#gab)" stroke="#c9b95c" stroke-width="0.8"/><path d="M15 0.8q0 5 5.2 5.2" fill="none" stroke="#fff" stroke-opacity="0.8" stroke-width="0.9"/><text x="2.3" y="13.6" font-size="10.5" font-weight="700" font-family="Liberation Sans" fill="#4d4618">ab</text></svg>
<div class="dt" style="left:28px;top:105px">H2</div>
<div class="dt" style="left:302px;top:105px;transform-origin:0 0;transform:scaleX(0.961)">Minumum lot size.If Use MM=false EA use this v...</div>
<div class="a" style="left:0;top:124px;width:596px;height:25px;background:#ffffff;border-top:1px solid #d6d6d6"></div>
<div class="a" style="left:298px;top:124px;width:1px;height:25px;background:#d6d6d6"></div>
<svg class="a" style="left:3px;top:127px" width="22" height="23" viewBox="0 0 22 23"><defs><linearGradient id="gnum" x1="0" y1="0" x2="0" y2="1"><stop offset="0" stop-color="#c4eef6"/><stop offset="1" stop-color="#8fd3e4"/></linearGradient></defs><path d="M0.5 2.5q0-2 2-2h12.5l5.5 5.5v14.5l-1.5 2-1.5-2.5-2 1.5-2-2-2 1.5-2-1.5-2 1.5-2-1.5-2 1.5-1.5-1z" fill="url(#gnum)" stroke="#62b9d0" stroke-width="0.8"/><path d="M15 0.8q0 5 5.2 5.2" fill="none" stroke="#fff" stroke-opacity="0.8" stroke-width="0.9"/><text x="2.2" y="10.5" font-size="8.5" font-weight="700" font-family="Liberation Sans" fill="#1f5f72">1</text><path d="M6.2 12l3-8.5" stroke="#1f5f72" stroke-width="1.3"/><text x="8.4" y="13.8" font-size="8.5" font-weight="700" font-family="Liberation Sans" fill="#1f5f72">2</text></svg>
<div class="dt" style="left:28px;top:130px">MinLots</div>
<div class="dt" style="left:302px;top:130px;transform-origin:0 0;transform:scaleX(1.0)">0.01</div>
<div class="a" style="left:0;top:149px;width:596px;height:25px;background:#ebebeb;border-top:1px solid #d6d6d6"></div>
<div class="a" style="left:298px;top:149px;width:1px;height:25px;background:#d6d6d6"></div>
<svg class="a" style="left:3px;top:152px" width="22" height="23" viewBox="0 0 22 23"><defs><linearGradient id="gnum" x1="0" y1="0" x2="0" y2="1"><stop offset="0" stop-color="#c4eef6"/><stop offset="1" stop-color="#8fd3e4"/></linearGradient></defs><path d="M0.5 2.5q0-2 2-2h12.5l5.5 5.5v14.5l-1.5 2-1.5-2.5-2 1.5-2-2-2 1.5-2-1.5-2 1.5-2-1.5-2 1.5-1.5-1z" fill="url(#gnum)" stroke="#62b9d0" stroke-width="0.8"/><path d="M15 0.8q0 5 5.2 5.2" fill="none" stroke="#fff" stroke-opacity="0.8" stroke-width="0.9"/><text x="2.2" y="10.5" font-size="8.5" font-weight="700" font-family="Liberation Sans" fill="#1f5f72">1</text><path d="M6.2 12l3-8.5" stroke="#1f5f72" stroke-width="1.3"/><text x="8.4" y="13.8" font-size="8.5" font-weight="700" font-family="Liberation Sans" fill="#1f5f72">2</text></svg>
<div class="dt" style="left:28px;top:155px">MaxLots</div>
<div class="dt" style="left:302px;top:155px;transform-origin:0 0;transform:scaleX(1.0)">1000.0</div>
<div class="a" style="left:0;top:174px;width:596px;height:25px;background:#ffffff;border-top:1px solid #d6d6d6"></div>
<div class="a" style="left:298px;top:174px;width:1px;height:25px;background:#d6d6d6"></div>
<svg class="a" style="left:3px;top:177px" width="22" height="23" viewBox="0 0 22 23"><defs><linearGradient id="gbool" x1="0" y1="0" x2="0" y2="1"><stop offset="0" stop-color="#9be39c"/><stop offset="1" stop-color="#5cc460"/></linearGradient></defs><path d="M0.5 2.5q0-2 2-2h12.5l5.5 5.5v14.5l-1.5 2-1.5-2.5-2 1.5-2-2-2 1.5-2-1.5-2 1.5-2-1.5-2 1.5-1.5-1z" fill="url(#gbool)" stroke="#3da043" stroke-width="0.8"/><path d="M15 0.8q0 5 5.2 5.2" fill="none" stroke="#fff" stroke-opacity="0.8" stroke-width="0.9"/><path d="M3 13.5l3.5-4.2h2.5M10.5 12.5h4" stroke="#155c1c" stroke-width="1.6" fill="none"/></svg>
<div class="dt" style="left:28px;top:180px">UseMM</div>
<div class="dt" style="left:302px;top:180px;transform-origin:0 0;transform:scaleX(1.0)">true</div>
<div class="a" style="left:0;top:199px;width:596px;height:25px;background:#ebebeb;border-top:1px solid #d6d6d6"></div>
<div class="a" style="left:298px;top:199px;width:1px;height:25px;background:#d6d6d6"></div>
<svg class="a" style="left:3px;top:202px" width="22" height="23" viewBox="0 0 22 23"><defs><linearGradient id="gbool" x1="0" y1="0" x2="0" y2="1"><stop offset="0" stop-color="#9be39c"/><stop offset="1" stop-color="#5cc460"/></linearGradient></defs><path d="M0.5 2.5q0-2 2-2h12.5l5.5 5.5v14.5l-1.5 2-1.5-2.5-2 1.5-2-2-2 1.5-2-1.5-2 1.5-2-1.5-2 1.5-1.5-1z" fill="url(#gbool)" stroke="#3da043" stroke-width="0.8"/><path d="M15 0.8q0 5 5.2 5.2" fill="none" stroke="#fff" stroke-opacity="0.8" stroke-width="0.9"/><path d="M3 13.5l3.5-4.2h2.5M10.5 12.5h4" stroke="#155c1c" stroke-width="1.6" fill="none"/></svg>
<div class="dt" style="left:28px;top:205px">Recovery</div>
<div class="dt" style="left:302px;top:205px;transform-origin:0 0;transform:scaleX(1.0)">false</div>
</div>
<div class="a" style="left:1348px;top:154px;width:22px;height:238px;background:#f3f3f3"></div>
<div class="a" style="left:1357px;top:176px;width:3px;height:57px;background:#8a8a8a;border-radius:2px"></div>
<div class="btn" style="left:1382px;top:324px;width:138px">Load</div>
<div class="btn" style="left:1382px;top:364px;width:138px">Save</div>
<div class="btn" style="left:1220px;top:416px;width:98px;border:2px solid #1f68c0;line-height:22px">OK</div>
<div class="btn" style="left:1328px;top:416px;width:98px">Cancel</div>
<div class="btn" style="left:1436px;top:416px;width:98px">Reset</div>
<div class="a" style="left:0;top:748px;width:1920px;height:246px;background:#f0f0f0"></div>
<div class="a" style="left:0;top:989px;width:1920px;height:5px;background:#f7f7f7"></div>
<div class="a" style="left:3px;top:772px;width:16px;height:218px;background:linear-gradient(90deg,#b4cde8,#a2bfdf)"></div>
<div class="a" style="left:0;top:0;font-size:15px;color:#1a1a1a;line-height:16px;white-space:pre;transform-origin:0 0;transform:translate(4px,988px) rotate(-90deg)">Terminal</div>
<svg class="a" style="left:5px;top:756px" width="11" height="11"><path d="M1.5 1.5l8 8M9.5 1.5l-8 8" stroke="#1a1a1a" stroke-width="1.5"/></svg>
<div class="a" style="left:20px;top:754px;width:1895px;height:209px;background:#fff;border-left:1px solid #a0a0a0;border-top:1px solid #a0a0a0"></div>
<div class="a" style="left:219px;top:755px;width:1px;height:26px;background:#e5e5e5"></div>
<div class="tt" style="left:28px;top:761px;font-size:14.5px">Time</div>
<div class="tt" style="left:227px;top:761px;font-size:14.5px">Message</div>
<div class="a" style="left:21px;top:781px;width:1893px;height:24px;background:#ebebeb;border-top:1px solid #d9d9d9"></div>
<div class="a" style="left:219px;top:781px;width:1px;height:24px;background:#d9d9d9"></div>
<div class="a" style="left:28px;top:788px;width:9.5px;height:9.5px;border-radius:50%;background:radial-gradient(circle at 35% 35%,#eeeeee,#b0b0b0 60%);border:1.5px solid #858585"></div>
<div class="tt" style="left:48px;top:785px">2025.09.24 07:14:09.873</div>
<div class="tt" style="left:226px;top:785px;transform-origin:0 0;transform:scaleX(1.03)">H-EImpulse EURUSD,H4: initialized</div>
<div class="a" style="left:21px;top:805px;width:1893px;height:25px;background:#ffffff;border-top:1px solid #d9d9d9"></div>
<div class="a" style="left:219px;top:805px;width:1px;height:25px;background:#d9d9d9"></div>
<div class="a" style="left:28px;top:813px;width:9.5px;height:9.5px;border-radius:50%;background:radial-gradient(circle at 35% 35%,#eeeeee,#b0b0b0 60%);border:1.5px solid #858585"></div>
<div class="tt" style="left:48px;top:810px">2025.09.24 07:14:09.873</div>
<div class="tt" style="left:226px;top:810px;transform-origin:0 0;transform:scaleX(1.035)">Custom indicator H-EImpulse EURUSD,H4: loaded successfully</div>
<div class="a" style="left:21px;top:830px;width:1893px;height:25px;background:#ebebeb;border-top:1px solid #d9d9d9"></div>
<div class="a" style="left:219px;top:830px;width:1px;height:25px;background:#d9d9d9"></div>
<div class="a" style="left:28px;top:838px;width:9.5px;height:9.5px;border-radius:50%;background:radial-gradient(circle at 35% 35%,#eeeeee,#b0b0b0 60%);border:1.5px solid #858585"></div>
<div class="tt" style="left:48px;top:835px">2025.09.24 07:14:09.303</div>
<div class="tt" style="left:226px;top:835px;transform-origin:0 0;transform:scaleX(1.022)">H-E-Spider_1.91 EURUSD,H4: initialized</div>
<div class="a" style="left:21px;top:855px;width:1893px;height:25px;background:#ffffff;border-top:1px solid #d9d9d9"></div>
<div class="a" style="left:219px;top:855px;width:1px;height:25px;background:#d9d9d9"></div>
<div class="a" style="left:28px;top:863px;width:9.5px;height:9.5px;border-radius:50%;background:radial-gradient(circle at 35% 35%,#eeeeee,#b0b0b0 60%);border:1.5px solid #858585"></div>
<div class="tt" style="left:48px;top:860px">2025.09.24 07:14:06.183</div>
<div class="tt" style="left:226px;top:860px;transform-origin:0 0;transform:scaleX(1.03)">H-EImpulse EURUSD,H4: initialized</div>
<div class="a" style="left:21px;top:880px;width:1893px;height:25px;background:#ebebeb;border-top:1px solid #d9d9d9"></div>
<div class="a" style="left:219px;top:880px;width:1px;height:25px;background:#d9d9d9"></div>
<div class="a" style="left:28px;top:888px;width:9.5px;height:9.5px;border-radius:50%;background:radial-gradient(circle at 35% 35%,#eeeeee,#b0b0b0 60%);border:1.5px solid #858585"></div>
<div class="tt" style="left:48px;top:885px">2025.09.24 07:14:06.183</div>
<div class="tt" style="left:226px;top:885px;transform-origin:0 0;transform:scaleX(1.071)">H-E-Spider_1.91 EURUSD,H4 inputs: OPMM="------------------Lot settings------------------"; LotsStep=0.01; H1="Increase lot size every BalanceStep of balance"; BalanceStep=80; H2="Minumum lot size.If Use MM=false EA use this value for fixed lot size";...</div>
<div class="a" style="left:21px;top:905px;width:1893px;height:25px;background:#ffffff;border-top:1px solid #d9d9d9"></div>
<div class="a" style="left:219px;top:905px;width:1px;height:25px;background:#d9d9d9"></div>
<div class="a" style="left:28px;top:913px;width:9.5px;height:9.5px;border-radius:50%;background:radial-gradient(circle at 35% 35%,#eeeeee,#b0b0b0 60%);border:1.5px solid #858585"></div>
<div class="tt" style="left:48px;top:910px">2025.09.24 07:14:06.183</div>
<div class="tt" style="left:226px;top:910px;transform-origin:0 0;transform:scaleX(1.018)">Expert H-E-Spider_1.91 EURUSD,H4: loaded successfully</div>
<div class="a" style="left:21px;top:930px;width:1893px;height:25px;background:#ebebeb;border-top:1px solid #d9d9d9"></div>
<div class="a" style="left:219px;top:930px;width:1px;height:25px;background:#d9d9d9"></div>
<div class="a" style="left:28px;top:938px;width:9.5px;height:9.5px;border-radius:50%;background:radial-gradient(circle at 35% 35%,#eeeeee,#b0b0b0 60%);border:1.5px solid #858585"></div>
<div class="tt" style="left:48px;top:935px">2025.09.24 07:14:06.166</div>
<div class="tt" style="left:226px;top:935px;transform-origin:0 0;transform:scaleX(1.035)">Custom indicator H-EImpulse EURUSD,H4: loaded successfully</div>
<div class="a" style="left:21px;top:955px;width:1893px;height:1px;background:#d9d9d9"></div>
<div class="a" style="left:20px;top:962px;width:1895px;height:1px;background:#000"></div>
<div class="a" style="left:21px;top:963px;width:1893px;height:1px;background:#fbfbfb"></div>
<div class="a" style="left:777px;top:963px;width:1px;height:24px;background:#fbfbfb"></div>
<div class="a" style="left:778px;top:962px;width:73px;height:25px;background:#fff;border:1px solid #000;border-top:none"></div>
<div class="tab" style="left:36px;color:#8c8c8c">Trade</div>
<div class="tab" style="left:99px;color:#8c8c8c">Exposure</div>
<div class="tab" style="left:184px;color:#8c8c8c">Account History</div>
<div class="tab" style="left:314px;color:#8c8c8c">News</div>
<div class="tab" style="left:375px;color:#8c8c8c">Alerts</div>
<div class="tab" style="left:438px;color:#8c8c8c">Mailbox</div>
<div class="tab" style="left:527px;color:#8c8c8c">Market</div>
<div class="tab" style="left:622px;color:#8c8c8c">Articles</div>
<div class="tab" style="left:696px;color:#8c8c8c">Code Base</div>
<div class="tab" style="left:791px;color:#1a1a1a">Experts</div>
<div class="tab" style="left:864px;color:#8c8c8c">Journal</div>
<div class="sep" style="left:86px"></div>
<div class="sep" style="left:171px"></div>
<div class="sep" style="left:301px"></div>
<div class="sep" style="left:362px"></div>
<div class="sep" style="left:425px"></div>
<div class="sep" style="left:514px"></div>
<div class="sep" style="left:610px"></div>
<div class="sep" style="left:683px"></div>
<div class="sep" style="left:923px"></div>
<div class="a" style="left:495px;top:971px;font-size:11px;font-weight:700;color:#e0202a;line-height:14px">6</div>
<div class="a" style="left:577px;top:971px;font-size:11px;font-weight:700;color:#e0202a;line-height:14px">133</div></body></html>
